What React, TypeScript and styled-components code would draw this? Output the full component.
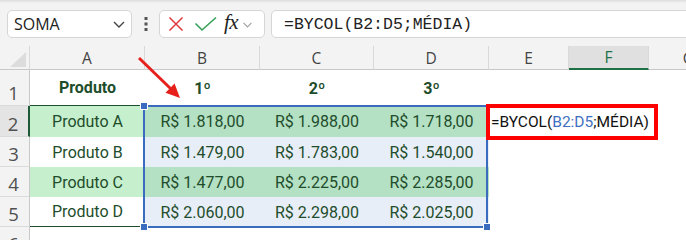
import React from 'react';
import styled, { createGlobalStyle } from 'styled-components';

const GlobalStyle = createGlobalStyle`
  html, body {
    margin: 0;
    padding: 0;
    background: #ffffff;
  }
`;

const Page = styled.div`
  width: 686px;
  height: 240px;
  overflow: hidden;
  background: #ffffff;
  font-family: Roboto, "Liberation Sans", sans-serif;
`;

const Toolbar = styled.div`
  height: 46px;
  box-sizing: border-box;
  background: #f3f3f3;
  box-shadow: inset 0 3px 3px -2px rgba(0, 0, 0, 0.12);
  display: flex;
  align-items: flex-start;
  padding: 10px 0 0 7px;
`;

const NameBox = styled.div`
  width: 125px;
  height: 28px;
  box-sizing: border-box;
  background: #fff;
  border: 1px solid #d6d6d6;
  border-radius: 5px;
  display: flex;
  align-items: center;
  justify-content: space-between;
  padding: 0 5px 0 6px;
  font-family: "Open Sans", sans-serif;
  font-size: 16px;
  color: #222;
`;

const Dots = styled.div`
  width: 27px;
  height: 28px;
  display: flex;
  align-items: center;
  justify-content: center;
`;

const FxBox = styled.div`
  width: 106px;
  height: 28px;
  box-sizing: border-box;
  background: #fff;
  border: 1px solid #d6d6d6;
  border-radius: 5px;
  display: flex;
  align-items: center;
  padding-left: 8px;
`;

const FxLabel = styled.span`
  font-family: "Liberation Serif", serif;
  font-style: italic;
  font-size: 21px;
  color: #222;
  margin: -3px 4px 0 6px;
  letter-spacing: -0.5px;
`;

const FormulaInput = styled.div`
  flex: 1;
  margin-left: 6px;
  margin-right: -10px;
  height: 28px;
  box-sizing: border-box;
  background: #fff;
  border: 1px solid #d6d6d6;
  border-radius: 5px;
  display: flex;
  align-items: center;
  padding-left: 12px;
  font-family: "Liberation Mono", monospace;
  font-size: 16.5px;
  color: #222;
`;

const Sheet = styled.div`
  position: relative;
  display: grid;
  grid-template-columns: 30px 115px 115px 114px 115px 80px 80px 80px;
  grid-template-rows: 24px 36px 31px 30px 30px 30px 30px;
`;

const Corner = styled.div`
  background: #f3f3f3;
  border-bottom: 1px solid #c8c8c8;
  border-right: 1px solid #d9d9d9;
  display: flex;
  align-items: flex-end;
  justify-content: flex-end;
  padding: 0 3px 2px 0;
`;

const ColHead = styled.div<{ $active?: boolean }>`
  background: ${p => (p.$active ? '#e0e0e0' : '#f3f3f3')};
  border-bottom: ${p => (p.$active ? '2px solid #1e7145' : '1px solid #c8c8c8')};
  border-right: 1px solid #d9d9d9;
  display: flex;
  align-items: center;
  justify-content: center;
  font-family: "Open Sans", sans-serif;
  font-size: 15.5px;
  color: ${p => (p.$active ? '#1e7145' : '#444')};
`;

const RowHead = styled.div<{ $active?: boolean }>`
  background: ${p => (p.$active ? '#e4e4e4' : '#f3f3f3')};
  border-bottom: 1px solid #dadada;
  border-right: ${p => (p.$active ? '2px solid #1e5a38' : '1px solid #c8c8c8')};
  display: flex;
  align-items: flex-end;
  justify-content: center;
  padding-bottom: 3px;
  box-sizing: border-box;
  font-family: "Open Sans", sans-serif;
  font-size: 18.5px;
  line-height: 1;
  color: #505050;
  padding-right: 2px;
`;

const Cell = styled.div<{ $fill?: string; $bold?: boolean; $line?: string }>`
  background: ${p => p.$fill || 'transparent'};
  border-bottom: ${p => (p.$line ? `1px solid ${p.$line}` : 'none')};
  display: flex;
  align-items: center;
  justify-content: center;
  font-size: 16px;
  font-weight: ${p => (p.$bold ? 700 : 400)};
  color: #1e4d2b;
  white-space: nowrap;
`;

const OverflowCell = styled.div`
  position: relative;
  z-index: 1;
  display: flex;
  align-items: center;
  padding-left: 2px;
  font-size: 15.5px;
  color: #111;
  white-space: nowrap;
  overflow: visible;
`;

const Ref = styled.span`
  color: #3f6fc0;
`;

const Selection = styled.div`
  position: absolute;
  left: 143px;
  top: 59px;
  width: 345px;
  height: 123px;
  box-sizing: border-box;
  border: 2px solid #3a6bbf;
  z-index: 2;
`;

const Handle = styled.span<{ $x: 'l' | 'r'; $y: 't' | 'b' }>`
  position: absolute;
  width: 6px;
  height: 6px;
  background: #3a6bbf;
  border: 1px solid #fff;
  ${p => (p.$x === 'l' ? 'left: -5px;' : 'right: -5px;')}
  ${p => (p.$y === 't' ? 'top: -5px;' : 'bottom: -5px;')}
`;

const RedBox = styled.div`
  position: absolute;
  left: 486px;
  top: 58px;
  width: 172px;
  height: 36px;
  box-sizing: border-box;
  border: 4px solid #ff0000;
  z-index: 3;
`;

const Arrow = styled.svg`
  position: absolute;
  left: 134px;
  top: 6px;
  z-index: 3;
`;

const Chevron = ({ color = '#444', size = 14 }: { color?: string; size?: number }) => (
  <svg width={size} height={size} viewBox="0 0 14 14">
    <path d="M2 5 L7 10 L12 5" fill="none" stroke={color} strokeWidth="1.4" />
  </svg>
);

const fills = {
  green: '#c6efce',
  greenSel: '#b4e0c3',
  blueSel: '#e8eef8',
};

const rows = [
  { n: 2, name: 'Produto A', vals: ['R$ 1.818,00', 'R$ 1.988,00', 'R$ 1.718,00'], green: true },
  { n: 3, name: 'Produto B', vals: ['R$ 1.479,00', 'R$ 1.783,00', 'R$ 1.540,00'], green: false },
  { n: 4, name: 'Produto C', vals: ['R$ 1.477,00', 'R$ 2.225,00', 'R$ 2.285,00'], green: true },
  { n: 5, name: 'Produto D', vals: ['R$ 2.060,00', 'R$ 2.298,00', 'R$ 2.025,00'], green: false },
];

const cols = ['A', 'B', 'C', 'D', 'E', 'F', 'G'];

export default function App() {
  return (
    <Page>
      <GlobalStyle />
      <Toolbar>
        <NameBox>
          <span>SOMA</span>
          <Chevron />
        </NameBox>
        <Dots>
          <svg width="4" height="14" viewBox="0 0 4 14">
            <rect x="0.5" y="0" width="3" height="3" fill="#555" />
            <rect x="0.5" y="5.5" width="3" height="3" fill="#555" />
            <rect x="0.5" y="11" width="3" height="3" fill="#555" />
          </svg>
        </Dots>
        <FxBox>
          <svg width="16" height="16" viewBox="0 0 16 16">
            <path d="M1.5 1.5 L14.5 14.5 M14.5 1.5 L1.5 14.5" stroke="#e0393b" strokeWidth="1.5" fill="none" />
          </svg>
          <svg width="24" height="16" viewBox="0 0 24 16" style={{ marginLeft: 10 }}>
            <path d="M1.5 7.5 L8 14 L22 1.5" stroke="#35a05a" strokeWidth="1.6" fill="none" />
          </svg>
          <FxLabel>fx</FxLabel>
          <Chevron color="#a0a0a0" size={11} />
        </FxBox>
        <FormulaInput>=BYCOL(B2:D5;MÉDIA)</FormulaInput>
      </Toolbar>

      <Sheet>
        <Corner>
          <svg width="16" height="15" viewBox="0 0 16 15">
            <polygon points="16,0 16,15 0,15" fill="#dcdcdc" />
          </svg>
        </Corner>
        {cols.map(c => (
          <ColHead key={c} $active={c === 'F'}>
            {c}
          </ColHead>
        ))}

        <RowHead>1</RowHead>
        <Cell $bold $line="#1e4d2b">Produto</Cell>
        <Cell $bold>1º</Cell>
        <Cell $bold>2º</Cell>
        <Cell $bold>3º</Cell>
        <Cell />
        <Cell />
        <Cell />

        {rows.map((r, i) => (
          <React.Fragment key={r.n}>
            <RowHead $active={r.n === 2}>{r.n}</RowHead>
            <Cell
              $fill={r.green ? fills.green : undefined}
              $line={i === rows.length - 1 ? '#1e4d2b' : undefined}
            >
              {r.name}
            </Cell>
            {r.vals.map((v, j) => (
              <Cell key={j} $fill={r.green ? fills.greenSel : fills.blueSel}>
                {v}
              </Cell>
            ))}
            {r.n === 2 ? (
              <OverflowCell>
                =BYCOL(<Ref>B2:D5</Ref>;MÉDIA)
              </OverflowCell>
            ) : (
              <Cell />
            )}
            <Cell />
            <Cell />
          </React.Fragment>
        ))}

        <RowHead>6</RowHead>

        <Selection>
          <Handle $x="l" $y="t" />
          <Handle $x="l" $y="b" />
          <Handle $x="r" $y="b" />
        </Selection>
        <RedBox />
        <Arrow width="52" height="52" viewBox="0 0 52 52">
          <line x1="5" y1="6" x2="37" y2="37" stroke="#e8201c" strokeWidth="3" />
          <polygon points="46,46 31.5,40.8 40.6,31.6" fill="#e8201c" />
        </Arrow>
      </Sheet>
    </Page>
  );
}
